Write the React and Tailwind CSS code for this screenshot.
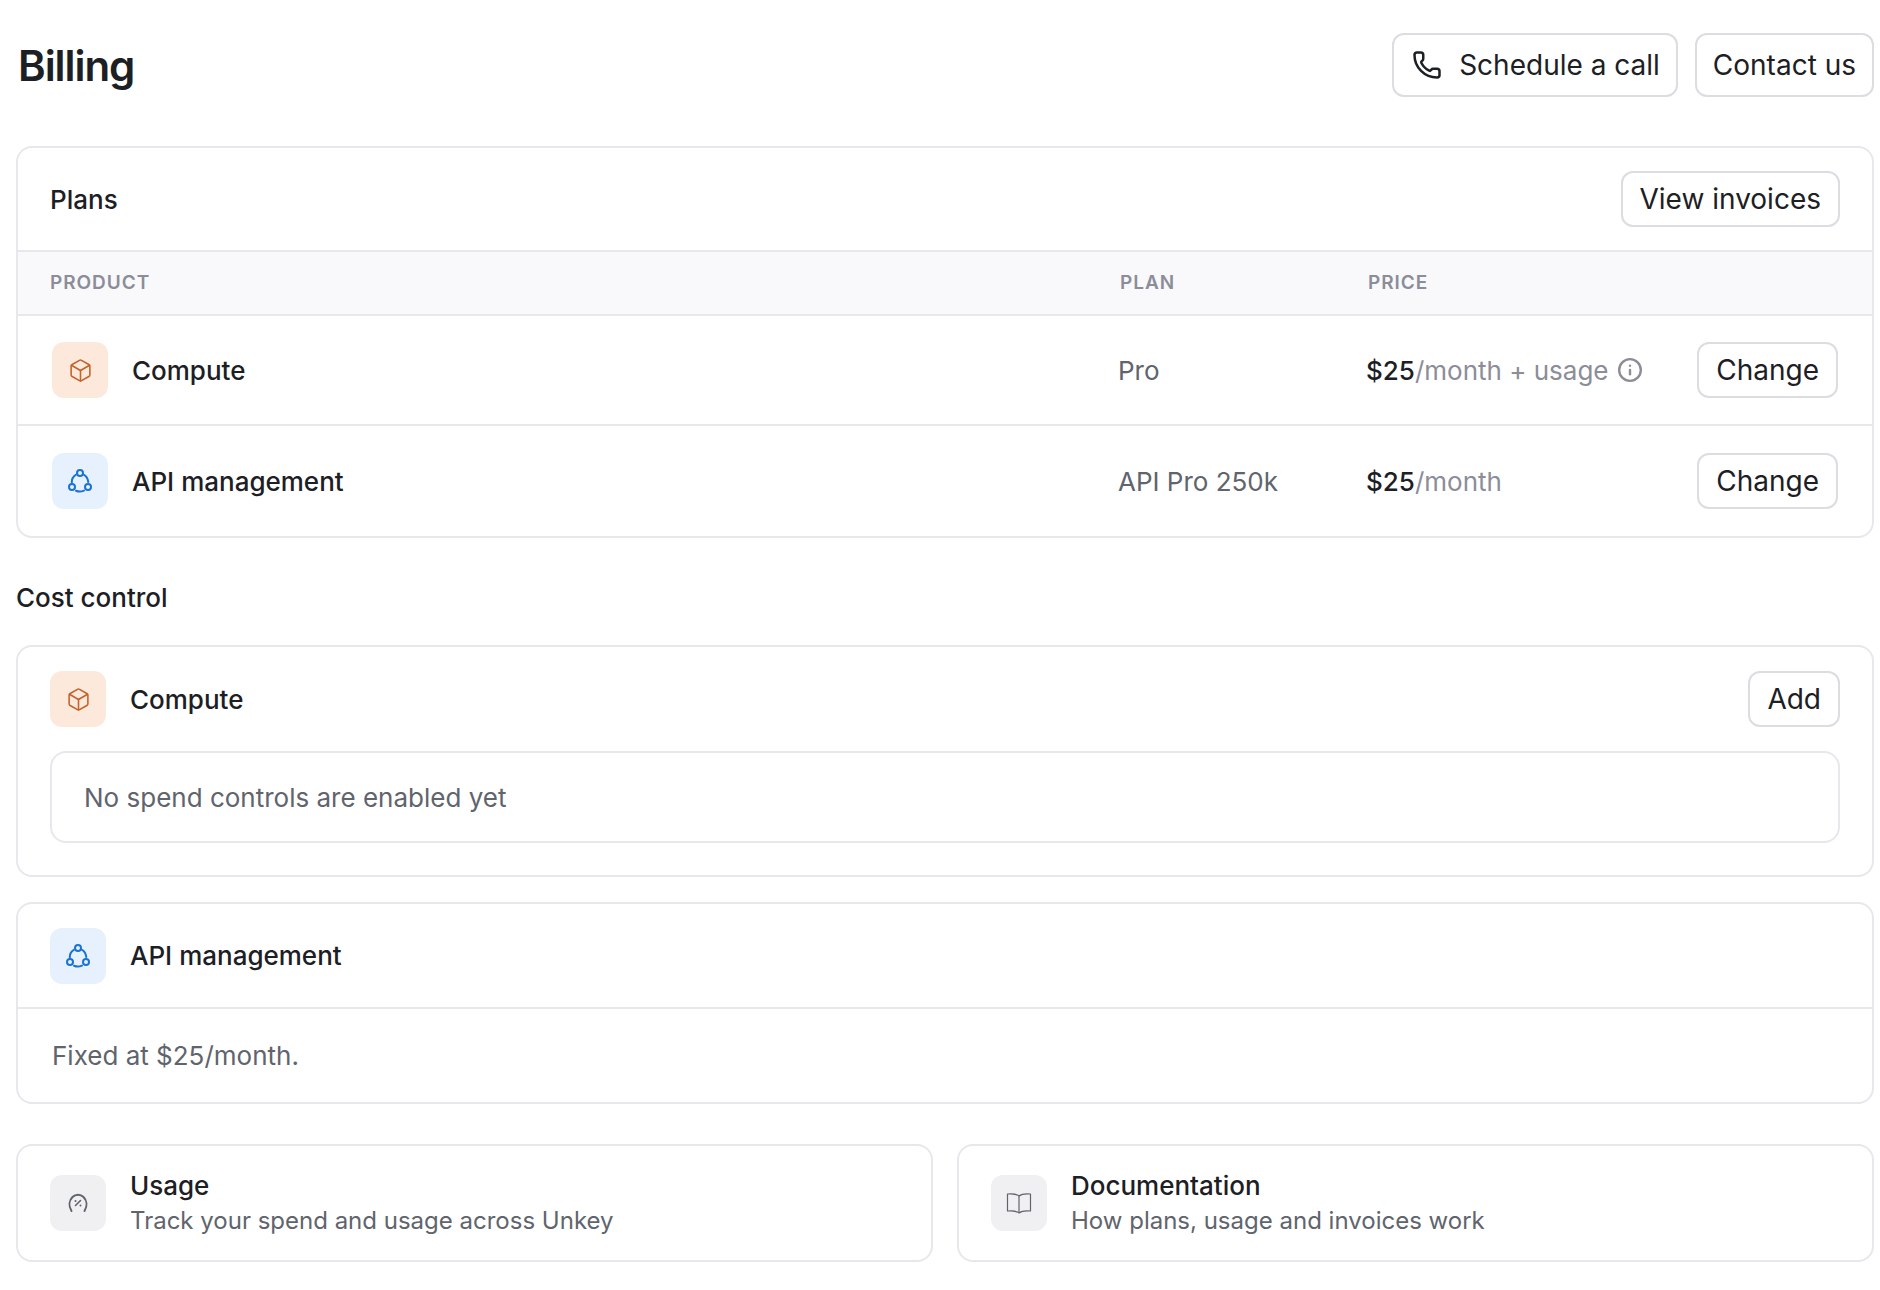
import { Box, Info, Phone } from "lucide-react";

const ApiIcon = () => (
  <svg width="26" height="26" viewBox="0 0 26 26" fill="none" stroke="#1a73d0" strokeWidth="2" strokeLinecap="round">
    <circle cx="13" cy="5" r="3" />
    <circle cx="5" cy="19" r="3" />
    <circle cx="21" cy="19" r="3" />
    <path d="M8.8 6.8C6 8.5 4.6 11.3 4.8 14.8" />
    <path d="M17 6.8c2.4 1.2 3.800 3.500 4.300 7.200" />
    <path d="M9 22.800c2.500 1 5.500 1 8-.2" />
  </svg>
);

const GaugeIcon = () => (
  <svg width="24" height="24" viewBox="0 0 24 24" fill="none" stroke="#60646c" strokeWidth="2" strokeLinecap="round">
    <path d="M5.500 20C2.500 15 3 9.500 6.500 6 9.500 3 14.500 3 17.500 6c3.500 3.500 4 9 1 14" />
    <path d="M14.500 9.500l-5 5" strokeWidth="1.600" />
    <circle cx="9.500" cy="10" r="1" fill="#60646c" stroke="none" />
    <circle cx="14.500" cy="14.500" r="1" fill="#60646c" stroke="none" />
  </svg>
);

const BookIcon = () => (
  <svg width="28" height="24" viewBox="0 0 28 24" fill="none" stroke="#60646c" strokeWidth="1.200" strokeLinejoin="round">
    <path d="M14 5C11.500 3 7 2.500 2.500 3v17c4.500-.5 9 0 11.500 2 2.500-2 7-2.500 11.500-2V3C21 2.500 16.500 3 14 5z" />
    <path d="M14 5v17" />
  </svg>
);

const IconBox = ({ color, children }) => (
  <div className={`flex h-14 w-14 shrink-0 items-center justify-center rounded-xl ${color}`}>{children}</div>
);

const ComputeIcon = () => (
  <IconBox color="bg-[#fde9dc]">
    <Box size={25} strokeWidth={1.5} color="#c4622a" />
  </IconBox>
);

const ApiBox = () => (
  <IconBox color="bg-[#e6f1fd]">
    <ApiIcon />
  </IconBox>
);

const Button = ({ className = "", children }) => (
  <button className={`flex items-center rounded-xl border-2 border-[#dcdce1] bg-white text-[28px] text-[#1c2024] ${className}`}>
    {children}
  </button>
);

const Card = ({ className = "", children }) => (
  <div className={`rounded-2xl border-2 border-[#e8e8ec] bg-white ${className}`}>{children}</div>
);

const PlanRow = ({ icon, name, plan, price, info, last }) => (
  <div className={`flex h-[110px] items-center pl-[34px] pr-[34px] ${last ? "" : "border-b-2 border-[#e8e8ec]"}`}>
    <div className="flex w-[1066px] items-center gap-6">
      {icon}
      <span className="text-[26px] font-medium text-[#1c2024]">{name}</span>
    </div>
    <div className="w-[248px] text-[26px] text-[#60646c]">{plan}</div>
    <div className="flex flex-1 items-center text-[26px] text-[#8b8d98]">
      <span className="font-medium text-[#1c2024]">$25</span>
      <span>{price}</span>
      {info && <Info size={26} strokeWidth={2.200} color="#8b8d98" className="ml-2" />}
    </div>
    <Button className="h-14 px-[17px]">Change</Button>
  </div>
);

const LinkCard = ({ icon, title, text }) => (
  <Card className="flex h-[118px] flex-1 items-center gap-6 pl-8">
    <div className="flex h-14 w-14 shrink-0 items-center justify-center rounded-xl bg-[#f0f0f3]">{icon}</div>
    <div className="flex flex-col">
      <span className="text-[26px] leading-[35px] font-medium text-[#1c2024]">{title}</span>
      <span className="text-[24px] leading-[35px] text-[#60646c]">{text}</span>
    </div>
  </Card>
);

export default function App() {
  return (
    <div className="min-h-[1290px] bg-white pt-[33px] pr-[6px] pl-4 font-['Inter','Liberation_Sans',sans-serif]">
      <div className="mb-[49px] flex h-16 items-center justify-between">
        <h1 className="pl-0.5 text-[42px] font-semibold tracking-tight text-[#1c2024]">Billing</h1>
        <div className="flex gap-[17px]">
          <Button className="h-16 gap-[17px] pl-[18px] pr-4">
            <Phone size={30} strokeWidth={2} />
            Schedule a call
          </Button>
          <Button className="h-16 px-4">Contact us</Button>
        </div>
      </div>

      <Card>
        <div className="flex h-[104px] items-center justify-between border-b-2 border-[#e8e8ec] pr-[32px] pl-[32px]">
          <span className="text-[26px] font-medium text-[#1c2024]">Plans</span>
          <Button className="h-14 px-[17px]">View invoices</Button>
        </div>
        <div className="flex h-[64px] items-center border-b-2 border-[#e8e8ec] bg-[#f9f9fb] pl-8 text-[19px] font-semibold tracking-wider text-[#8b8d98]">
          <span className="w-[1070px]">PRODUCT</span>
          <span className="w-[248px]">PLAN</span>
          <span>PRICE</span>
        </div>
        <PlanRow icon={<ComputeIcon />} name="Compute" plan="Pro" price="/month + usage" info />
        <PlanRow icon={<ApiBox />} name="API management" plan="API Pro 250k" price="/month" last />
      </Card>

      <h2 className="mt-[43px] mb-[30px] text-[26px] leading-[34px] font-medium text-[#1c2024]">Cost control</h2>

      <Card className="px-8 pt-[24px] pb-8">
        <div className="flex items-center justify-between">
          <div className="flex items-center gap-6">
            <ComputeIcon />
            <span className="text-[26px] font-medium text-[#1c2024]">Compute</span>
          </div>
          <Button className="h-14 px-[17px]">Add</Button>
        </div>
        <div className="mt-[24px] flex h-[92px] items-center rounded-2xl border-2 border-[#e8e8ec] pl-8 text-[26px] text-[#60646c]">
          No spend controls are enabled yet
        </div>
      </Card>

      <Card className="mt-[25px]">
        <div className="flex h-[105px] items-center gap-6 border-b-2 border-[#e8e8ec] pl-8">
          <ApiBox />
          <span className="text-[26px] font-medium text-[#1c2024]">API management</span>
        </div>
        <div className="flex h-[93px] items-center pl-[34px] text-[26px] text-[#60646c]">Fixed at $25/month.</div>
      </Card>

      <div className="mt-[40px] flex gap-6">
        <LinkCard icon={<GaugeIcon />} title="Usage" text="Track your spend and usage across Unkey" />
        <LinkCard icon={<BookIcon />} title="Documentation" text="How plans, usage and invoices work" />
      </div>
    </div>
  );
}
